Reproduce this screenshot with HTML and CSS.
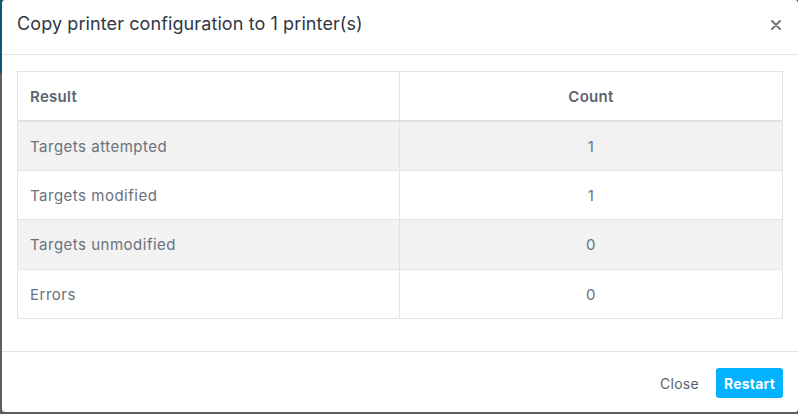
FILE: index.html
```html
<!DOCTYPE html>
<html lang="en">
<head>
  <meta charset="UTF-8" />
  <meta name="viewport" content="width=device-width, initial-scale=1" />
  <title>Copy printer configuration</title>
  <link rel="stylesheet" href="styles.css">
</head>
<body>
  <div class="app-header"></div>
  <div class="app-content"></div>

  <div class="modal">
    <div class="modal-header">
      <h3 class="modal-title">Copy printer configuration to 1 printer(s)</h3>
      <button class="close" aria-label="Close">
        <svg width="10" height="10" viewBox="0 0 10 10">
          <path d="M1 1 L9 9 M9 1 L1 9" stroke="#777" stroke-width="2" stroke-linecap="round" />
        </svg>
      </button>
    </div>

    <div class="modal-body">
      <table class="table">
        <thead>
          <tr>
            <th class="left">Result</th>
            <th>Count</th>
          </tr>
        </thead>
        <tbody>
          <tr>
            <td class="left">Targets attempted</td>
            <td>1</td>
          </tr>
          <tr>
            <td class="left">Targets modified</td>
            <td>1</td>
          </tr>
          <tr>
            <td class="left">Targets unmodified</td>
            <td>0</td>
          </tr>
          <tr>
            <td class="left">Errors</td>
            <td>0</td>
          </tr>
        </tbody>
      </table>
    </div>

    <div class="modal-footer">
      <button class="btn-link">Close</button>
      <button class="btn-primary">Restart</button>
    </div>
  </div>
</body>
</html>
```

FILE: styles.css
```css
* {
  margin: 0;
  padding: 0;
  box-sizing: border-box;
}
html, body {
  height: 100%;
  font-family: 'Inter', 'Open Sans', sans-serif;
  background-color: #5e5e5e;
  overflow: hidden;
}

.app-header {
  height: 73px;
  background-color: #0d566f;
}
.app-content {
  height: calc(100% - 73px);
  background-color: #5e5e5e;
}

.modal {
  position: absolute;
  top: 0;
  left: 2px;
  right: 0;
  height: 412px;
  background: white;
  border-radius: 3px;
  display: flex;
  flex-direction: column;
}

.modal-header {
  display: flex;
  justify-content: space-between;
  align-items: center;
  height: 55px;
  padding: 0 15px 8px;
  border-bottom: 1px solid #e3e3e8;
}
.modal-title {
  font-size: 18px;
  font-weight: 400;
  color: #313742;
  letter-spacing: 0.1px;
}
.close {
  border: none;
  background: none;
  width: 10px;
  height: 10px;
  margin-right: 2px;
  margin-top: 4px;
  display: flex;
  cursor: pointer;
}

.modal-body {
  padding: 16px 15px 32px;
}

.table {
  width: 100%;
  border-collapse: separate;
  border-spacing: 0;
  border: 1px solid #e3e3e8;
  font-size: 15px;
  letter-spacing: 0.5px;
  color: #6a717c;
}
.table th {
  height: 50px;
  font-weight: 600;
  letter-spacing: 0.3px;
  color: #5c6370;
  text-align: center;
  border-bottom: 2px solid #dfe1e7;
}
.table td {
  height: 49px;
  text-align: center;
  border-top: 1px solid #e3e3e8;
}
.table tbody tr:first-child td {
  border-top: none;
  height: 48px;
}
.table tbody tr:nth-child(3) td {
  height: 50px;
}
.table .left {
  text-align: left;
  padding-left: 12px;
  width: 50%;
  border-right: 1px solid #e3e3e8;
}
.table tbody tr:nth-child(odd) td {
  background-color: #f2f2f2;
}

.modal-footer {
  flex: 1;
  border-top: 1px solid #e3e3e8;
  display: flex;
  justify-content: flex-end;
  align-items: flex-start;
  padding: 16px 15px 0;
  gap: 4px;
}
.btn-link {
  border: none;
  background: none;
  font-family: inherit;
  font-size: 14px;
  letter-spacing: 0.3px;
  color: #5c6370;
  height: 30px;
  padding: 0 13px;
  cursor: pointer;
}
.btn-primary {
  border: none;
  background-color: #00b2ff;
  color: white;
  font-family: inherit;
  font-size: 14px;
  font-weight: 700;
  letter-spacing: 0.2px;
  height: 30px;
  width: 67px;
  border-radius: 3px;
  cursor: pointer;
}
```
